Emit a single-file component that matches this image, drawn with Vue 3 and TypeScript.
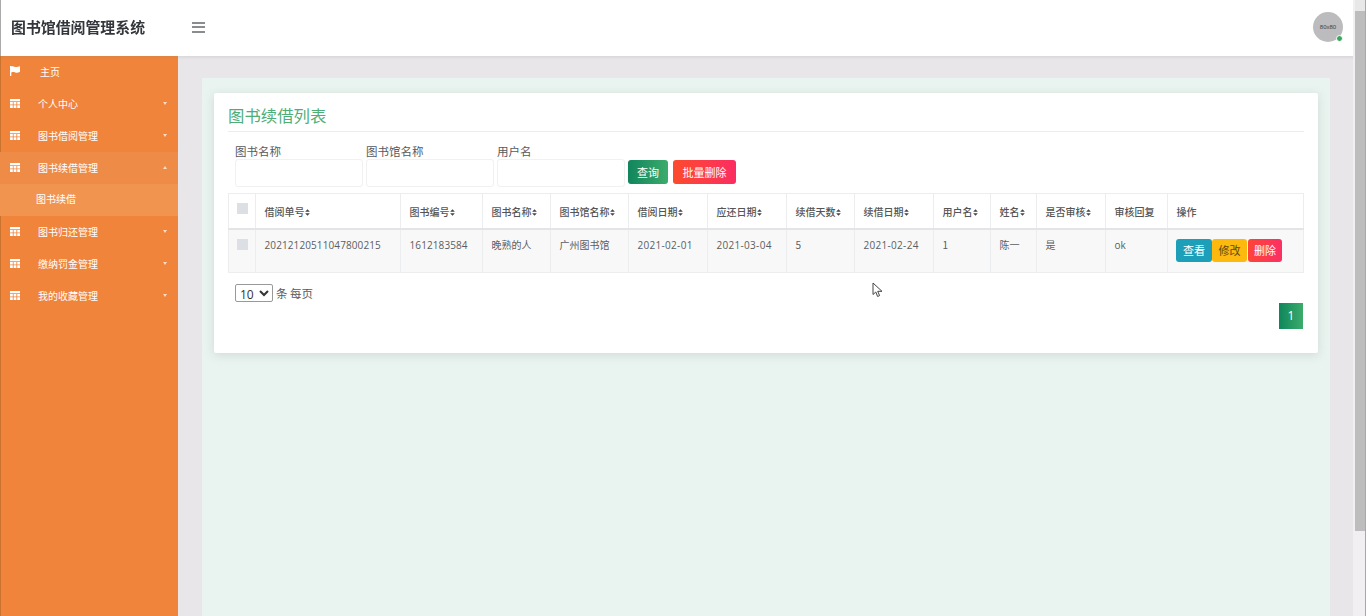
<template>
  <div class="page">
    <div class="shell">
      <header class="topbar">
        <div class="brand">图书馆借阅管理系统</div>
        <button class="burger" aria-label="menu"><span></span><span></span><span></span></button>
        <div class="avatar">
          <span>80x80</span>
          <i class="online"></i>
        </div>
      </header>
      <div class="body">
        <aside class="sidebar">
          <template v-for="item in menu" :key="item.label">
            <div class="menu-row" :class="{ open: item.open, home: item.home }">
              <svg v-if="item.home" class="ico flag" viewBox="0 0 10 10">
                <path d="M0 0h1.300v10H0z M1.300 .6c2.200-1 3.400.7 5 .5 1-.1 2-.5 3.700-.9v5.600c-1.800 1-3.300 1.200-4.800.6-1.500-.5-2.600-.5-3.900 0z" fill="#fff" />
              </svg>
              <svg v-else class="ico" viewBox="0 0 10 9">
                <path d="M0 0h10v2.200H0zM0 3h2.800v2.500H0zM3.600 3h2.800v2.500H3.600zM7.200 3H10v2.500H7.200zM0 6.300h2.800V9H0zM3.600 6.300h2.800V9H3.600zM7.200 6.300H10V9H7.200z" fill="#fff" />
              </svg>
              <span class="menu-label">{{ item.label }}</span>
              <i v-if="!item.home" class="caret" :class="{ up: item.open }"></i>
            </div>
            <div v-if="item.open" class="submenu">图书续借</div>
          </template>
        </aside>
        <main class="main">
          <div class="panel">
            <section class="card">
              <h2 class="title">图书续借列表</h2>
              <form class="filters" @submit.prevent>
                <label v-for="f in filters" :key="f" class="field">
                  <span>{{ f }}</span>
                  <input type="text" />
                </label>
                <button class="btn green">查询</button>
                <button class="btn red">批量删除</button>
              </form>
              <table class="grid">
                <colgroup>
                  <col v-for="(w, i) in colWidths" :key="i" :style="{ width: w + 'px' }" />
                </colgroup>
                <thead>
                  <tr>
                    <th class="check"><i class="box"></i></th>
                    <th v-for="h in headers" :key="h.text">
                      {{ h.text }}<svg v-if="h.sort" class="sort" viewBox="0 0 6 8"><path d="M3 0l2.800 3.200H.2zM3 8L.2 4.800h5.600z" fill="#444" /></svg>
                    </th>
                  </tr>
                </thead>
                <tbody>
                  <tr>
                    <td class="check"><i class="box"></i></td>
                    <td v-for="(c, i) in row" :key="i">{{ c }}</td>
                    <td class="actions">
                      <button class="mini teal">查看</button><button class="mini amber">修改</button><button class="mini pink">删除</button>
                    </td>
                  </tr>
                </tbody>
              </table>
              <div class="page-size">
                <select><option>10</option><option>25</option><option>50</option></select>
                <span>条 每页</span>
              </div>
              <div class="pager"><a class="page-no">1</a></div>
            </section>
          </div>
        </main>
      </div>
    </div>
    <div class="scrollbar">
      <div class="arrow"></div>
      <div class="thumb"></div>
    </div>
    <svg class="cursor" width="11" height="16" viewBox="0 0 11 16">
      <path d="M1 1v11.500l2.800-2.500 1.800 4.500 2-.9-1.900-4.300H10z" fill="#fff" stroke="#444" stroke-width="1" />
    </svg>
  </div>
</template>

<script setup lang="ts">
interface MenuItem {
  label: string
  home?: boolean
  open?: boolean
}

const menu: MenuItem[] = [
  { label: '主页', home: true },
  { label: '个人中心' },
  { label: '图书借阅管理' },
  { label: '图书续借管理', open: true },
  { label: '图书归还管理' },
  { label: '缴纳罚金管理' },
  { label: '我的收藏管理' },
]

const filters = ['图书名称', '图书馆名称', '用户名']

const colWidths = [27, 145, 82, 68, 78, 79, 79, 68, 79, 57, 46, 69, 62, 136]

const headers = [
  { text: '借阅单号', sort: true },
  { text: '图书编号', sort: true },
  { text: '图书名称', sort: true },
  { text: '图书馆名称', sort: true },
  { text: '借阅日期', sort: true },
  { text: '应还日期', sort: true },
  { text: '续借天数', sort: true },
  { text: '续借日期', sort: true },
  { text: '用户名', sort: true },
  { text: '姓名', sort: true },
  { text: '是否审核', sort: true },
  { text: '审核回复', sort: false },
  { text: '操作', sort: false },
]

const row = [
  '20212120511047800215',
  '1612183584',
  '晚熟的人',
  '广州图书馆',
  '2021-02-01',
  '2021-03-04',
  '5',
  '2021-02-24',
  '1',
  '陈一',
  '是',
  'ok',
]
</script>

<style>
html,
body {
  margin: 0;
  height: 100%;
  overflow: hidden;
}
</style>

<style scoped>
.page {
  display: flex;
  width: 1366px;
  height: 616px;
  overflow: hidden;
  position: relative;
  font-family: "Noto Sans CJK SC", "Open Sans", sans-serif;
  color: #555;
  filter: blur(0.35px);
}

.shell {
  flex: 1;
  display: flex;
  flex-direction: column;
  min-width: 0;
}

.topbar {
  height: 56px;
  flex-shrink: 0;
  display: flex;
  align-items: center;
  background: #fff;
  padding: 0 12px 2px 10px;
  border-left: 1px solid #aaa;
  box-sizing: border-box;
  position: relative;
  box-shadow: 0 1px 3px rgba(120, 120, 120, 0.2);
}

.brand {
  width: 181px;
  margin-top: -2px;
  font-size: 14.900px;
  font-weight: 700;
  color: #33373b;
  white-space: nowrap;
}

.burger {
  display: flex;
  flex-direction: column;
  gap: 2.500px;
  width: 13px;
  padding: 0;
  border: none;
  background: none;
}

.burger span {
  height: 2px;
  background: #8a8d90;
}

.avatar {
  position: relative;
  width: 30px;
  height: 30px;
  margin-left: auto;
  border-radius: 50%;
  background: #bcbcbe;
  display: flex;
  align-items: center;
  justify-content: center;
  font-family: "Liberation Sans", sans-serif;
  font-size: 6px;
  color: #444;
}

.online {
  position: absolute;
  right: 0;
  bottom: 0;
  width: 5px;
  height: 5px;
  border-radius: 50%;
  border: 1px solid #fff;
  background: #3aa85c;
}

.body {
  flex: 1;
  display: flex;
  min-height: 0;
}

.sidebar {
  width: 178px;
  flex-shrink: 0;
  background: #ef843a;
  box-sizing: border-box;
  box-shadow: inset 1px 0 0 #c9732f;
}

.menu-row {
  height: 32px;
  display: flex;
  align-items: center;
  padding: 0 10px;
  font-size: 10px;
  color: #fff;
}

.menu-row.open {
  background: #ee8b47;
}

.ico {
  width: 10px;
  height: 9px;
  margin-top: -2px;
  flex-shrink: 0;
}

.flag {
  height: 10px;
  margin-top: -3px;
}

.menu-label {
  margin-left: 18px;
  line-height: 1;
}

.home .menu-label {
  margin-left: 20px;
}

.caret {
  margin-left: auto;
  margin-right: 1px;
  width: 0;
  height: 0;
  margin-top: -1px;
  border-left: 2.500px solid transparent;
  border-right: 2.500px solid transparent;
  border-top: 3px solid #fbdcc6;
}

.caret.up {
  border-top: none;
  border-bottom: 3px solid #fbdcc6;
}

.submenu {
  height: 32px;
  line-height: 30px;
  padding-left: 36px;
  font-size: 10px;
  color: #fff;
  background: #f0944f;
}

.main {
  flex: 1;
  min-width: 0;
  background: #e9e6ea;
  padding: 22px 25px 0 24px;
  display: flex;
}

.panel {
  flex: 1;
  background: #e9f3ef;
  padding: 15px 12px 0;
}

.card {
  height: 260px;
  box-sizing: border-box;
  background: #fff;
  border-radius: 2px;
  box-shadow: 0 2px 10px rgba(150, 165, 160, 0.3);
  padding: 11px 14px 0;
}

.title {
  margin: 0;
  height: 27px;
  line-height: 22px;
  font-size: 16.400px;
  font-weight: 400;
  color: #4fae78;
  border-bottom: 1px solid #ececec;
}

.filters {
  display: flex;
  align-items: flex-end;
  padding: 11px 0 0 7px;
  height: 44px;
  box-sizing: content-box;
}

.field {
  display: flex;
  flex-direction: column;
  width: 131px;
  font-size: 11.500px;
  line-height: 16px;
  color: #565a5e;
}

.field input {
  width: 128px;
  height: 28px;
  box-sizing: border-box;
  border: 1px solid #f1f1f1;
  border-radius: 3px;
  outline: none;
  background: #fff;
}

.btn {
  height: 24px;
  margin-bottom: 3px;
  border: none;
  border-radius: 3px;
  font-family: inherit;
  font-size: 11px;
  color: #fff;
  padding: 0;
}

.green {
  width: 40px;
  background: linear-gradient(90deg, #11855c, #3cab6c);
}

.red {
  width: 63px;
  margin-left: 5px;
  background: linear-gradient(90deg, #fd4b2d, #fb2d62);
}

.grid {
  width: 1075px;
  margin-top: 6px;
  border-collapse: collapse;
  table-layout: fixed;
  font-size: 10px;
}

.grid th,
.grid td {
  border: 1px solid #ebedef;
  padding: 0 0 0 8.500px;
  text-align: left;
  white-space: nowrap;
  overflow: hidden;
  box-sizing: border-box;
}

.grid th {
  height: 35px;
  padding-top: 1px;
  font-weight: 500;
  color: #555;
  border-bottom: 2px solid #e2e4e7;
}

.grid td {
  height: 44px;
  padding-top: 9px;
  padding-bottom: 16px;
  vertical-align: top;
  line-height: 12px;
  background: #f8f8f8;
  color: #5a5e62;
}

.grid td:nth-child(2),
.grid td:nth-child(3),
.grid td:nth-child(6),
.grid td:nth-child(7),
.grid td:nth-child(9),
.grid td:nth-child(13) {
  font-family: "Open Sans", sans-serif;
  font-size: 10px;
  letter-spacing: 0.100px;
}

.grid td:nth-child(6),
.grid td:nth-child(7),
.grid td:nth-child(9) {
  letter-spacing: 0.300px;
}

.grid .check {
  padding: 0;
  text-align: center;
}

.grid th.check {
  padding-bottom: 3px;
}

.grid td.check {
  padding-top: 9px;
}

.box {
  display: inline-block;
  width: 11px;
  height: 11px;
  background: #dcdfe4;
}

.sort {
  width: 5px;
  height: 7px;
}

.grid td.actions {
  padding: 9px 0 0 8px;
}

.mini {
  height: 23px;
  border: none;
  border-radius: 3px;
  padding: 0;
  font-family: inherit;
  font-size: 11px;
  vertical-align: top;
}

.teal {
  width: 36px;
  background: #1d9fba;
  color: #fff;
}

.amber {
  width: 35px;
  background: #fdb90d;
  color: #5c4a10;
}

.pink {
  width: 34px;
  margin-left: 1px;
  background: linear-gradient(90deg, #fd4536, #fb3064);
  color: #fff;
}

.page-size {
  display: flex;
  align-items: center;
  gap: 3px;
  margin: 11px 0 0 7px;
  height: 18px;
  font-size: 11.500px;
  color: #565a5e;
}

.page-size select {
  width: 38px;
  height: 18px;
  font-family: "Open Sans", sans-serif;
  font-size: 12px;
  color: #333;
  background: #fff;
  border: 1px solid #999;
  border-radius: 2px;
}

.pager {
  display: flex;
  justify-content: flex-end;
  margin-top: 1px;
  padding-right: 1px;
}

.page-no {
  display: block;
  width: 24px;
  height: 26px;
  line-height: 26px;
  text-align: center;
  font-family: "Open Sans", sans-serif;
  font-size: 12px;
  color: #fff;
  background: linear-gradient(90deg, #0f875c, #3cab6c);
}

.scrollbar {
  width: 13px;
  margin-left: -2px;
  flex-shrink: 0;
  box-sizing: border-box;
  background: #f1eff2;
  border-right: 1px solid #a8a8a8;
  padding-left: 2px;
  display: flex;
  flex-direction: column;
  position: relative;
}

.arrow {
  height: 11px;
  flex-shrink: 0;
  background: #e8e8e8;
}

.thumb {
  height: 520px;
  background: #bdbdbe;
}

.cursor {
  position: absolute;
  left: 872px;
  top: 282px;
}
</style>
